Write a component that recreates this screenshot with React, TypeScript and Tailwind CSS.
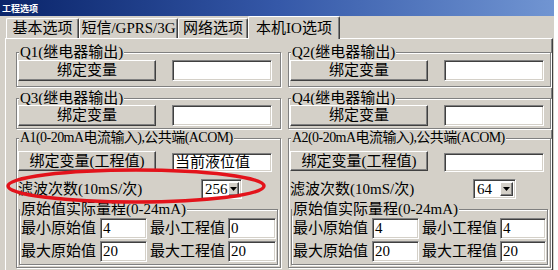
const raised =
  "bg-[#d4d0c8] border border-t-white border-l-white border-r-[#404040] border-b-[#404040] shadow-[inset_-1px_-1px_0_#808080]";
const sunken =
  "bg-white border border-t-[#808080] border-l-[#808080] border-r-white border-b-white shadow-[inset_1px_1px_0_#404040,inset_-1px_-1px_0_#d4d0c8]";
const etched = "border border-[#808080] shadow-[inset_1px_1px_0_#fff,1px_1px_0_#fff]";

function Group({
  title,
  className = "",
  legendClass = "ml-[2px] text-[15px]",
  children,
}: {
  title: string;
  className?: string;
  legendClass?: string;
  children: React.ReactNode;
}) {
  return (
    <fieldset className={`${etched} min-w-0 ${className}`}>
      <legend className={`px-[1px] bg-[#d4d0c8] leading-[14px] whitespace-nowrap ${legendClass}`}>{title}</legend>
      {children}
    </fieldset>
  );
}

function Field({ value = "", className = "" }: { value?: string; className?: string }) {
  return (
    <div className={`${sunken} flex items-center pl-[2px] text-[15px] leading-none whitespace-nowrap ${className}`}>
      {value}
    </div>
  );
}

function Combo({ value, width }: { value: string; width: string }) {
  return (
    <div className={`${sunken} ${width} h-[20px] flex items-stretch p-[2px]`}>
      <span className="flex-1 flex items-center pl-[1px] text-[15px] leading-none">{value}</span>
      <span className={`${raised} w-[13px] flex items-center justify-center`}>
        <svg width="7" height="4" viewBox="0 0 7 4">
          <polygon points="0,0 7,0 3.5,4" fill="#000" />
        </svg>
      </span>
    </div>
  );
}

function Column({ q1, q2, a, aValue, combo, comboW, mins }: {
  q1: string; q2: string; a: string; aValue: string; combo: string; comboW: string; mins: [string, string, string, string];
}) {
  const qRow = (
    <div className="flex items-start pl-[1px]">
      <button className={`${raised} w-[138px] h-[21px] flex items-center justify-center text-[15px] leading-none`}>绑定变量</button>
      <Field className="ml-[16px] w-[100px] h-[21px]" />
    </div>
  );
  return (
    <div className="flex flex-col">
      <Group title={q1} className="pb-[5px]">
        <div className="pt-[1px]">{qRow}</div>
      </Group>
      <Group title={q2} className="mt-[4px] pb-[2px]">
        {qRow}
      </Group>
      <Group title={a} className="mt-[2px] pb-[2px]" legendClass="ml-[2px] text-[14px] tracking-[-0.55px]">
        <div className="mt-[6px] flex items-start pl-[1px]">
          <button className={`${raised} w-[138px] h-[20px] flex items-center justify-center text-[15px] leading-none`}>
            绑定变量(工程值)
          </button>
          <Field value={aValue} className="ml-[16px] mt-[2px] w-[100px] h-[19px]" />
        </div>
        <div className="mt-[7px] flex items-center h-[20px] pl-[1px]">
          <span className="w-[183px] text-[15px] leading-none whitespace-nowrap">滤波次数(10mS/次)</span>
          <Combo value={combo} width={comboW} />
        </div>
        <Group
          title="原始值实际量程(0-24mA)"
          className="mx-[2px] mt-[3px] pb-[2px]"
          legendClass="ml-[0px] text-[15px]"
        >
          <div className="pt-[2px] flex flex-col gap-[2px] pl-[1px] pr-[1px]">
            <div className="flex items-center h-[21px] text-[15px] leading-none">
              <span className="w-[79px] whitespace-nowrap">最小原始值</span>
              <Field value={mins[0]} className="w-[47px] h-[21px]" />
              <span className="w-[81px] pl-[3px] whitespace-nowrap">最小工程值</span>
              <Field value={mins[1]} className="flex-1 h-[21px]" />
            </div>
            <div className="flex items-center h-[21px] text-[15px] leading-none">
              <span className="w-[79px] whitespace-nowrap">最大原始值</span>
              <Field value={mins[2]} className="w-[47px] h-[21px]" />
              <span className="w-[81px] pl-[3px] whitespace-nowrap">最大工程值</span>
              <Field value={mins[3]} className="flex-1 h-[21px]" />
            </div>
          </div>
        </Group>
      </Group>
    </div>
  );
}

const tabs = [
  { label: "基本选项", w: "w-[73px]" },
  { label: "短信/GPRS/3G", w: "w-[99px]" },
  { label: "网络选项", w: "w-[70px]" },
];

export default function App() {
  return (
    <div className="relative w-[558px] h-[270px] overflow-hidden bg-white text-black font-['Liberation_Serif','Noto_Sans_CJK_SC',serif]">
      <div className="w-[554px] h-[270px] bg-[#d4d0c8]">
        {/* title bar */}
        <div className="h-[16px] bg-gradient-to-r from-[#0a246a] via-[#3558a8] to-[#7195d2] flex items-center pl-[2px]">
          <span className="text-white text-[9px] font-bold leading-none font-['Noto_Sans_CJK_SC',sans-serif]">工程选项</span>
        </div>

        {/* tabs */}
        <div className="h-[22px] flex items-end pl-[6px]">
          {tabs.map((t) => (
            <div
              key={t.label}
              className={`${t.w} h-[20px] flex items-center justify-center border-t border-l border-r border-t-white border-l-white border-r-[#404040] shadow-[inset_-1px_0_0_#808080] rounded-t-[2px] text-[15px] leading-none whitespace-nowrap`}
            >
              {t.label}
            </div>
          ))}
          <div className="relative z-10 w-[92px] h-[23px] mb-[-1px] bg-[#d4d0c8] flex items-center justify-center border-t border-l border-r border-t-white border-l-white border-r-[#404040] shadow-[inset_-1px_0_0_#808080] rounded-t-[2px] text-[15px] leading-none whitespace-nowrap">
            本机IO选项
          </div>
        </div>

        {/* panel */}
        <div className="ml-[5px] w-[548px] h-[240px] border-t border-l border-r border-t-white border-l-white border-r-[#404040] shadow-[inset_-1px_0_0_#808080] pt-[6px] pl-[10px] flex gap-[7px]">
          <div className="w-[265px]">
            <Column
              q1="Q1(继电器输出)"
              q2="Q3(继电器输出)"
              a="A1(0-20mA电流输入),公共端(ACOM)"
              aValue="当前液位值"
              combo="256"
              comboW="w-[41px]"
              mins={["4", "0", "20", "20"]}
            />
          </div>
          <div className="w-[263px]">
            <Column
              q1="Q2(继电器输出)"
              q2="Q4(继电器输出)"
              a="A2(0-20mA电流输入),公共端(ACOM)"
              aValue=""
              combo="64"
              comboW="w-[43px]"
              mins={["4", "4", "20", "20"]}
            />
          </div>
        </div>
      </div>

      {/* red annotation */}
      <svg className="absolute left-0 top-0 pointer-events-none" width="558" height="270">
        <ellipse cx="136" cy="186" rx="128" ry="16" fill="none" stroke="#e3131b" strokeWidth="3.5" />
      </svg>
    </div>
  );
}
